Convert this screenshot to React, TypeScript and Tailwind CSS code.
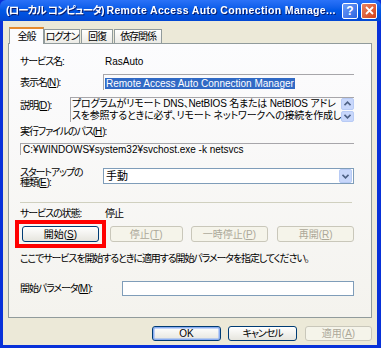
import React from 'react';

// 日本語ラベルは MS UI Gothic 相当の詰まった幅に寄せる
const jp = 'tracking-[-1.1px]';

const Chevron = ({ up = false }: { up?: boolean }) => (
  <svg width="7" height="5" viewBox="0 0 7 5" className={up ? 'rotate-180' : ''}>
    <path d="M0.5 0.8 L3.5 3.8 L6.5 0.8" fill="none" stroke="#4D6185" strokeWidth="1.6" />
  </svg>
);

interface BtnProps {
  children: React.ReactNode;
  disabled?: boolean;
  focused?: boolean;
  className?: string;
}

const XpButton = ({ children, disabled, focused, className = '' }: BtnProps) => (
  <div
    className={`flex items-center justify-center whitespace-nowrap rounded-[3px] border ${
      disabled
        ? 'border-[#C9C7BA] bg-[#F5F4EA] text-[#ACA899]'
        : 'border-[#003C74] bg-linear-to-b from-white to-[#E6E5DE] text-black'
    } ${focused ? 'shadow-[inset_0_0_0_1.5px_#8AADF2]' : ''} ${className}`}
  >
    {children}
  </div>
);

const U = ({ c }: { c: string }) => <span className="underline underline-offset-1 tracking-normal">{c}</span>;

export default function App() {
  return (
    <div className="w-[381px] h-[348px] flex flex-col bg-[#0831D9] font-['Liberation_Sans','Noto_Sans_CJK_JP',sans-serif] [font-feature-settings:'palt'] text-[10px] text-black overflow-hidden">
      {/* タイトルバー */}
      <div className="h-[21px] flex items-center rounded-t-[6px] bg-linear-to-b from-[#2A72F8] via-[#0058E6] to-[#0247D3] pl-[6px] pr-[4px]">
        <span className="flex-1 min-w-0 overflow-hidden text-white text-[10.5px] font-bold whitespace-nowrap drop-shadow-[1px_1px_0_#0A1D6E]">
          <span className="tracking-[-0.9px]">(ローカル コンピュータ)</span>{' '}
          <span className="tracking-[0.35px]">Remote Access Auto Connection Manage...</span>
        </span>
        <div className="ml-[6px] w-[16px] h-[16px] shrink-0 rounded-[2px] border border-white bg-linear-to-br from-[#6C9CF8] to-[#2D63E0] flex items-center justify-center text-white font-bold text-[12px] leading-none">
          ?
        </div>
        <div className="ml-[3px] w-[16px] h-[16px] shrink-0 rounded-[2px] border border-white bg-linear-to-br from-[#E9835F] to-[#D23E14] flex items-center justify-center">
          <svg width="9" height="9" viewBox="0 0 9 9">
            <path d="M1 1 L8 8 M8 1 L1 8" stroke="white" strokeWidth="1.8" />
          </svg>
        </div>
      </div>

      {/* 本体 */}
      <div className="flex-1 flex flex-col ml-[3px] mr-[4px] mb-[3px] bg-[#ECE9D8]">
        {/* タブ */}
        <div className={`flex items-end h-[22px] pl-[6px] relative z-10 whitespace-nowrap ${jp}`}>
          <div className="h-[17px] w-[35px] -mb-px flex items-center justify-center bg-[#FCFCFE] border-x border-[#919B9C] border-t-[2px] border-t-[#E68B2C]">
            全般
          </div>
          <div className="h-[14px] w-[36px] flex items-center justify-center border border-[#919B9C] border-b-0 bg-linear-to-b from-white to-[#ECEBE6]">
            ログオン
          </div>
          <div className="h-[14px] w-[32px] ml-px flex items-center justify-center border border-[#919B9C] border-b-0 bg-linear-to-b from-white to-[#ECEBE6]">
            回復
          </div>
          <div className="h-[14px] w-[48px] ml-px flex items-center justify-center border border-[#919B9C] border-b-0 bg-linear-to-b from-white to-[#ECEBE6]">
            依存関係
          </div>
        </div>

        {/* タブパネル */}
        <div className="mx-[5px] h-[275px] border border-[#919B9C] bg-linear-to-b from-[#FCFCFE] to-[#F4F3EE] pl-[11px] pr-[17px] pt-[10px] flex flex-col">
          <div className="flex items-center h-[14px]">
            <span className={`w-[83px] ${jp}`}>サービス名:</span>
            <span className="ml-[2px]">RasAuto</span>
          </div>

          <div className="flex items-center h-[16px] mt-[6px]">
            <span className={`w-[83px] ${jp}`}>
              表示名(<U c="N" />):
            </span>
            <div className="flex-1 h-full border-t border-l border-[#A7A6AA] pl-px pt-px whitespace-nowrap">
              <span className="bg-[#316AC5] text-white px-px">Remote Access Auto Connection Manager</span>
            </div>
          </div>

          <div className="flex items-start h-[25px] mt-[7px]">
            <span className={`w-[83px] mt-px ${jp}`}>
              説明(<U c="D" />):
            </span>
            <div className="flex-1 h-full flex border-t border-l border-[#A7A6AA]">
              <div className="flex-1 overflow-hidden pl-px leading-[11.5px] whitespace-nowrap tracking-[-0.2px]">
                <div>プログラムがリモート DNS、NetBIOS 名または NetBIOS アドレ</div>
                <div>スを参照するときに必ず、リモート ネットワークへの接続を作成し</div>
              </div>
              <div className="w-[13px] flex flex-col gap-px">
                <div className="flex-1 rounded-[2px] border border-[#B8CBF5] bg-[#C8D7FB] flex items-center justify-center">
                  <Chevron up />
                </div>
                <div className="flex-1 rounded-[2px] border border-[#B8CBF5] bg-[#C8D7FB] flex items-center justify-center">
                  <Chevron />
                </div>
              </div>
            </div>
          </div>

          <div className={`h-[12px] mt-[3px] flex items-center ${jp}`}>
            実行ファイルのパス(<U c="H" />):
          </div>
          <div className="h-[12px] mt-[6px] border-t border-l border-[#A7A6AA] pl-[2px] flex items-center whitespace-nowrap">
            C:¥WINDOWS¥system32¥svchost.exe -k netsvcs
          </div>

          <div className="flex items-center mt-[13px] h-[16px]">
            <div className={`w-[83px] leading-[10px] mt-[4px] ${jp}`}>
              <div>スタートアップの</div>
              <div>
                種類(<U c="E" />):
              </div>
            </div>
            <div className="flex-1 h-full border border-[#7F9DB9] bg-white flex items-center pl-[2px]">
              <span className="flex-1 text-[11px]">手動</span>
              <div className="w-[13px] h-[14px] mr-px rounded-[2px] border border-[#B8CBF5] bg-[#C8D7FB] flex items-center justify-center">
                <Chevron />
              </div>
            </div>
          </div>

          <div className="h-px bg-[#D0D0BF] mt-[18px] mr-[2px]" />

          <div className={`flex items-center h-[12px] mt-[4px] ${jp}`}>
            <span className="w-[85px]">サービスの状態:</span>
            <span>停止</span>
          </div>

          <div className="flex items-center h-[16px] mt-[7px] pl-[2px]">
            <div className="relative w-[77px] h-full">
              <XpButton className="h-full">
                開始(<U c="S" />)
              </XpButton>
              <span className="absolute -inset-x-[7px] -inset-y-[6px] border-[4px] border-[#FF0000] pointer-events-none" />
            </div>
            <XpButton disabled className="w-[73px] h-full ml-[11px]">
              停止(<U c="T" />)
            </XpButton>
            <XpButton disabled className="w-[78px] h-full ml-[8px]">
              一時停止(<U c="P" />)
            </XpButton>
            <XpButton disabled className="w-[77px] h-full ml-[9px]">
              再開(<U c="R" />)
            </XpButton>
          </div>

          <div className={`h-[12px] mt-[10px] flex items-center whitespace-nowrap ${jp}`}>
            ここでサービスを開始するときに適用する開始パラメータを指定してください。
          </div>

          <div className="flex items-center h-[15px] mt-[17px]">
            <span className={`w-[102px] ${jp}`}>
              開始パラメータ(<U c="M" />):
            </span>
            <div className="flex-1 h-full border border-[#7F9DB9] bg-white" />
          </div>
        </div>

        {/* 下部ボタン */}
        <div className="flex justify-end mt-[8px] pr-[5px] h-[15px]">
          <XpButton focused className="w-[69px] h-full">
            OK
          </XpButton>
          <XpButton className={`w-[69px] h-full ml-[7px] ${jp}`}>キャンセル</XpButton>
          <XpButton disabled className="w-[67px] h-full ml-[8px]">
            適用(<U c="A" />)
          </XpButton>
        </div>
      </div>
    </div>
  );
}
